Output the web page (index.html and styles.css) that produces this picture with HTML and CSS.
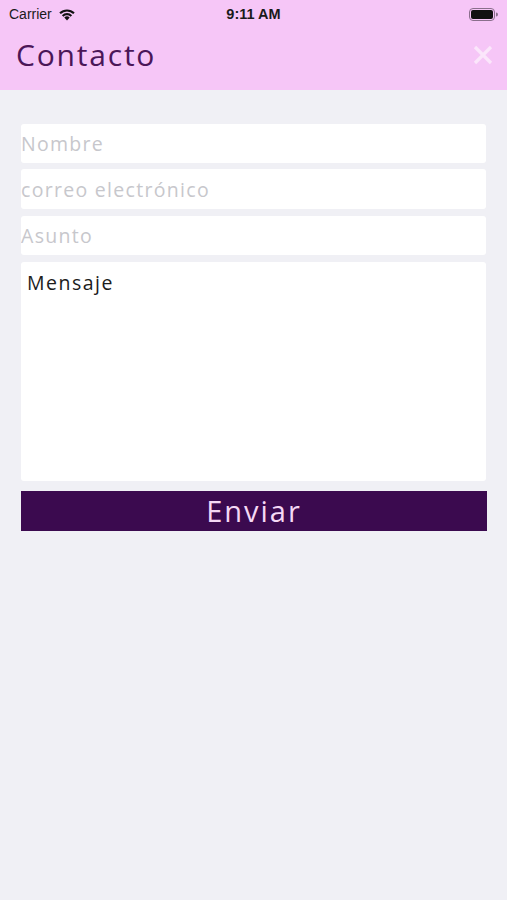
FILE: index.html
```html
<!DOCTYPE html>
<html lang="es">

<head>
	<meta charset="UTF-8">
	<meta name="viewport" content="width=device-width, initial-scale=1.0">
	<title>Contacto</title>
	<link rel="stylesheet" href="styles.css">
</head>

<body>
	<header class="top">
		<div class="status-bar">
			<div class="status-left">
				<span>Carrier</span>
				<svg class="wifi" width="18" height="13" viewBox="0 0 18 13">
					<path d="M9 12.5 L6.3 9.6 A3.9 3.9 0 0 1 11.7 9.6 Z" fill="#111" />
					<path d="M3.9 7.2 A7.3 7.3 0 0 1 14.1 7.2 L12.6 8.7 A5.2 5.2 0 0 0 5.4 8.7 Z" fill="#111" />
					<path d="M1.3 4.6 A11 11 0 0 1 16.7 4.6 L15.2 6.1 A8.9 8.9 0 0 0 2.8 6.1 Z" fill="#111" />
				</svg>
			</div>
			<span class="status-time">9:11 AM</span>
			<div class="status-right">
				<svg class="battery" width="29" height="13" viewBox="0 0 29 13">
					<rect x="0.5" y="0.5" width="25" height="12" rx="3.5" fill="none" stroke="#8a6f8c" />
					<rect x="2" y="2" width="22" height="9" rx="2" fill="#111" />
					<path d="M27 4.5 a1.8 1.8 0 0 1 0 4 z" fill="#8a6f8c" />
				</svg>
			</div>
		</div>
		<div class="nav-bar">
			<h1 class="nav-title">Contacto</h1>
			<button class="close-btn" aria-label="Cerrar">
				<svg width="20" height="20" viewBox="0 0 20 20">
					<path d="M2 2 L18 18 M18 2 L2 18" stroke="#fbe6fb" stroke-width="3.2" stroke-linecap="butt" />
				</svg>
			</button>
		</div>
	</header>

	<main class="contact">
		<form class="contact-form">
			<input class="field" type="text" placeholder="Nombre">
			<input class="field field-mail" type="email" placeholder="correo electrónico">
			<input class="field field-subject" type="text" placeholder="Asunto">
			<textarea class="field message">Mensaje</textarea>
			<button class="send" type="button">Enviar</button>
		</form>
	</main>
</body>

</html>
```

FILE: styles.css
```css
* {
	margin: 0;
	padding: 0;
	box-sizing: border-box;
}

body {
	width: 507px;
	min-height: 900px;
	background-color: #f0f0f5;
	font-family: "Open Sans", sans-serif;
}

.top {
	background-color: #f6c6f7;
	height: 90px;
}

.status-bar {
	height: 28px;
	display: flex;
	align-items: center;
	justify-content: space-between;
	padding: 0 9px 0 9px;
	font-family: "Liberation Sans", Arial, sans-serif;
	font-size: 14px;
	color: #1a1a1a;
}

.status-left {
	display: flex;
	align-items: center;
	gap: 6px;
	width: 120px;
}

.status-time {
	font-weight: bold;
	font-size: 14.5px;
}

.status-right {
	width: 120px;
	display: flex;
	justify-content: flex-end;
}

.nav-bar {
	height: 52px;
	display: flex;
	align-items: center;
	justify-content: space-between;
	padding: 0 14px 0 16px;
}

.nav-title {
	font-weight: 400;
	font-size: 30px;
	letter-spacing: 1.8px;
	color: #4b1658;
}

.close-btn {
	background: none;
	border: none;
	display: flex;
	margin-top: 2px;
}

.contact {
	padding: 34px 21px 0 21px;
}

.contact-form {
	display: flex;
	flex-direction: column;
}

.field {
	width: 465px;
	height: 39px;
	border: none;
	border-radius: 3px;
	background: #fff;
	font-family: "Open Sans", sans-serif;
	font-size: 19.5px;
	letter-spacing: 1.3px;
	padding: 0 0;
	color: #222;
	outline: none;
}

.field::placeholder {
	color: #c7c7cc;
}

.field-mail {
	margin-top: 6px;
	height: 40px;
}

.field-subject {
	margin-top: 7px;
}

.message {
	margin-top: 7px;
	height: 219px;
	resize: none;
	padding: 9px 6px;
	font-size: 19.5px;
	letter-spacing: 1.5px;
	line-height: 24px;
	color: #1c1c1c;
}

.send {
	margin-top: 10px;
	height: 40px;
	width: 466px;
	border: none;
	background-color: #3b0a4f;
	color: #f5d8f5;
	font-family: "Open Sans", sans-serif;
	font-size: 29px;
	letter-spacing: 2px;
	line-height: 40px;
}
```
